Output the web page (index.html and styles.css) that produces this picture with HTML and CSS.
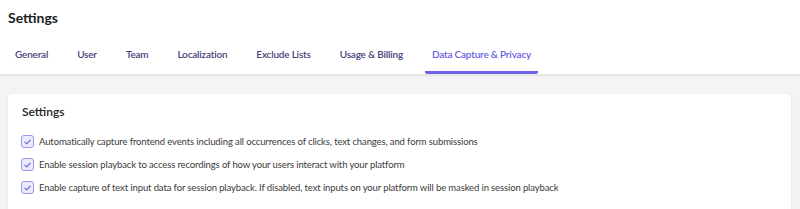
FILE: index.html
```html
<!DOCTYPE html>
<html>
<head>
<meta charset="utf-8">
<link rel="stylesheet" href="styles.css">
</head>
<body>
<header class="header">
  <h1 class="page-title">Settings</h1>
  <nav class="tabs">
    <a class="tab">General</a>
    <a class="tab">User</a>
    <a class="tab">Team</a>
    <a class="tab">Localization</a>
    <a class="tab">Exclude Lists</a>
    <a class="tab">Usage &amp; Billing</a>
    <a class="tab active">Data Capture &amp; Privacy</a>
  </nav>
</header>
<main class="content">
  <section class="card">
    <h2 class="card-title">Settings</h2>
    <ul class="options">
      <li class="option">
        <span class="check"><svg viewBox="0 0 12 12" width="12" height="12"><path d="M3.2 6.1 L5.2 8.1 L8.9 4" fill="none" stroke="#6b63e6" stroke-width="1.3" stroke-linecap="round" stroke-linejoin="round"/></svg></span>
        <span class="label">Automatically capture frontend events including all occurrences of clicks, text changes, and form submissions</span>
      </li>
      <li class="option">
        <span class="check"><svg viewBox="0 0 12 12" width="12" height="12"><path d="M3.2 6.1 L5.2 8.1 L8.9 4" fill="none" stroke="#6b63e6" stroke-width="1.3" stroke-linecap="round" stroke-linejoin="round"/></svg></span>
        <span class="label">Enable session playback to access recordings of how your users interact with your platform</span>
      </li>
      <li class="option">
        <span class="check"><svg viewBox="0 0 12 12" width="12" height="12"><path d="M3.2 6.1 L5.2 8.1 L8.9 4" fill="none" stroke="#6b63e6" stroke-width="1.3" stroke-linecap="round" stroke-linejoin="round"/></svg></span>
        <span class="label">Enable capture of text input data for session playback. If disabled, text inputs on your platform will be masked in session playback</span>
      </li>
    </ul>
  </section>
</main>
</body>
</html>
```
FILE: styles.css
```css
* { box-sizing: border-box; }
html, body { margin: 0; padding: 0; }
body {
  background: #f4f4f4;
  font-family: Lato, "Open Sans", sans-serif;
  color: #333;
  height: 209px;
  overflow: hidden;
}
.header {
  background: #fff;
  padding: 9px 8px 0;
  box-shadow: 0 1px 2px rgba(0,0,0,0.08);
  border-bottom: 1px solid #e6e6e6;
}
.page-title {
  margin: 0;
  font-size: 14px;
  font-weight: 700;
  color: #222;
  line-height: 18px;
}
.tabs {
  display: flex;
  gap: 15px;
  margin-top: 20px;
}
.tab {
  padding: 0 7px 9px;
  font-size: 10px;
  font-weight: 600;
  letter-spacing: -0.2px;
  color: #45437a;
  line-height: 15px;
  border-bottom: 3px solid transparent;
}
.tab.active {
  color: #6760e4;
  border-bottom-color: #6b63ea;
  border-radius: 2px;
}
.content {
  padding: 19px 8px 0 8px;
}
.card {
  background: #fff;
  border-radius: 4px;
  box-shadow: 0 1px 3px rgba(0,0,0,0.1);
  padding: 10px 14px 24px;
  margin-right: 1px;
}
.card-title {
  margin: 0;
  font-size: 12px;
  font-weight: 600;
  color: #222;
  line-height: 16px;
}
.options {
  list-style: none;
  margin: 14px 0 0;
  padding: 0;
  display: flex;
  flex-direction: column;
  gap: 8px;
}
.option {
  display: flex;
  align-items: center;
  gap: 5px;
  height: 15px;
}
.check {
  width: 13px;
  height: 13px;
  border: 1px solid #9d97f2;
  background: #eceafd;
  border-radius: 3px;
  display: flex;
  align-items: center;
  justify-content: center;
  flex: none;
  margin-left: -1px;
}
.check svg { display: block; }
.label {
  font-size: 9.5px;
  letter-spacing: -0.12px;
  color: #3a3a3a;
}
```
